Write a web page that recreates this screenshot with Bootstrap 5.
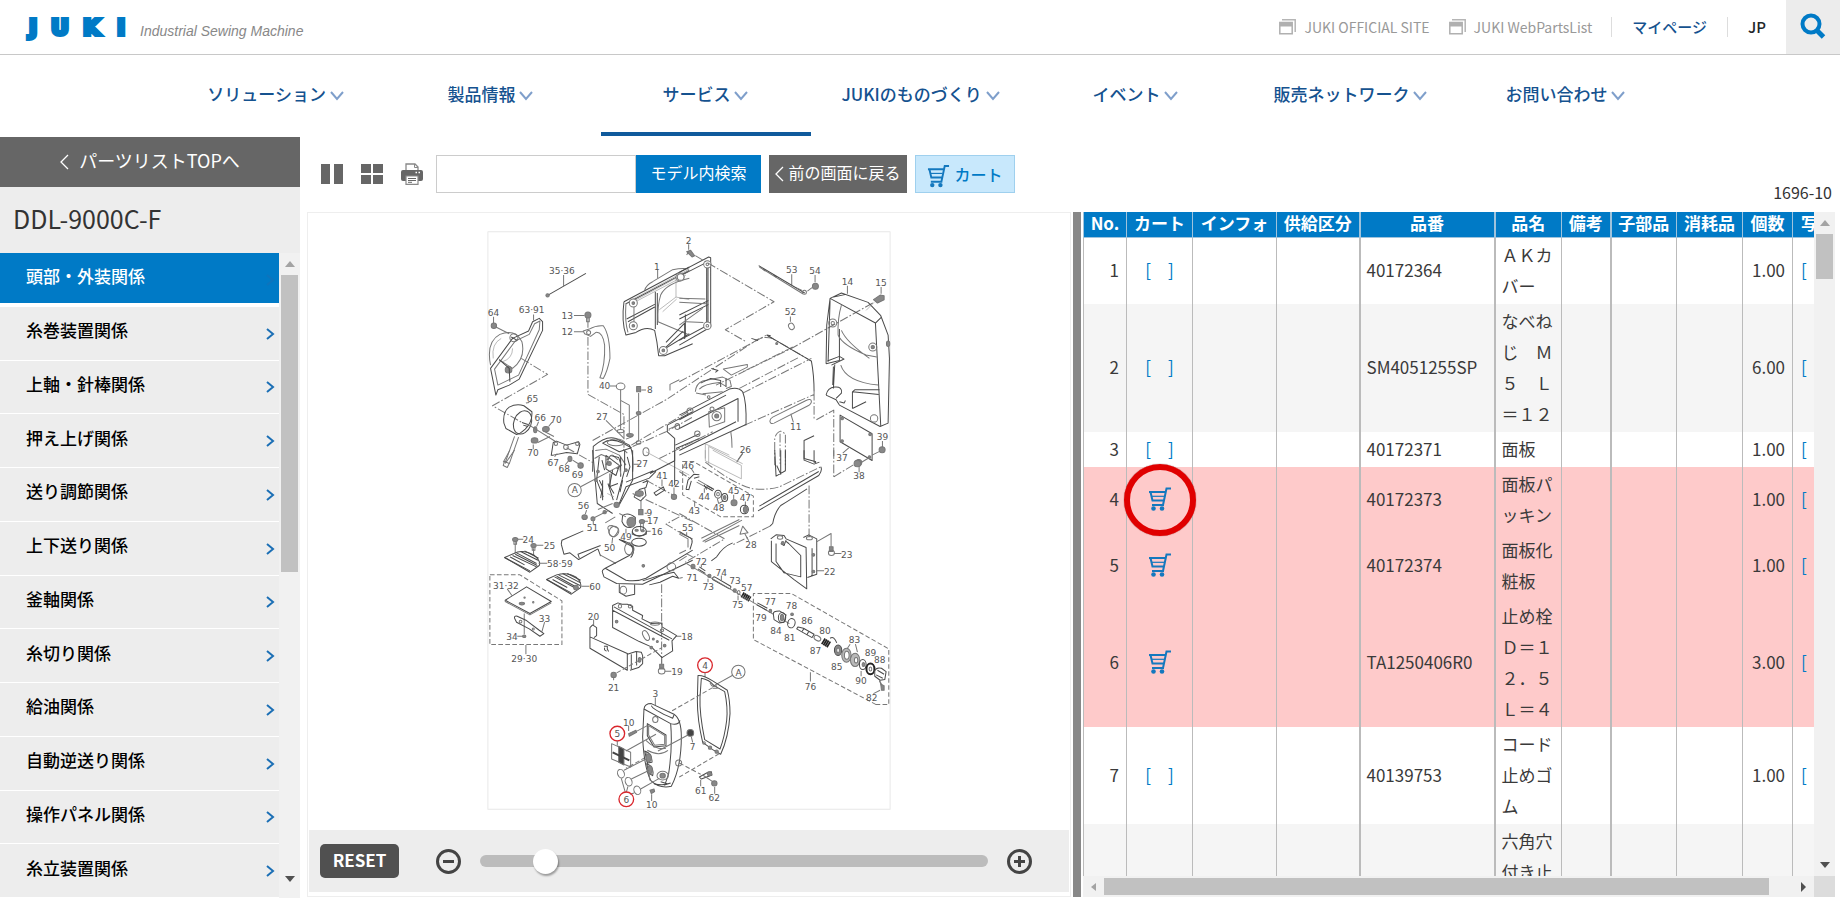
<!DOCTYPE html>
<html lang="ja">
<head>
<meta charset="utf-8">
<meta name="viewport" content="width=device-width, initial-scale=1">
<title>JUKI パーツリスト DDL-9000C-F</title>
<link rel="stylesheet" href="https://cdn.jsdelivr.net/npm/bootstrap@5.3.0/dist/css/bootstrap.min.css">
<style>
:root{--jk-blue:#007ac6;--jk-navy:#105a9c;--jk-gray:#666;--jk-pale:#ededed}
body{font-family:"Noto Sans CJK JP",sans-serif;font-size:17px;line-height:31px;color:#333}
a{text-decoration:none}
.site-top{height:55px;border-bottom:1px solid #c8c8c8}
.tagline{font:italic 14px/18px "Liberation Sans",sans-serif;color:#888}
.ext-link{font-size:14px;color:#999;margin-right:19px}
.top-link{font-size:15px;font-weight:500;line-height:20px;padding:0 20px;border-left:1px solid #ddd;color:#15528f}
.search-btn{width:54px;background:#ececec}
.main-nav{height:82px;max-width:1505px}
.main-nav a{flex:1 1 0;height:81px;margin:0 2px 0 3px;padding-top:23px;color:#15528f;font-weight:500;border-bottom:4px solid transparent;text-align:center;white-space:nowrap}
.main-nav a.active{border-color:var(--jk-navy)}
.side{width:300px;background:var(--jk-pale)}
.side-top{height:50px;background:var(--jk-gray);color:#fff;font-size:18px;gap:10px}
.side h1{height:66px;font-size:25px;line-height:62px;padding-left:13px;font-weight:400}
.side-list a{flex:1 1 0;min-height:0;color:#000;font-weight:500;padding:0 4px 7px 26px;border-bottom:1px solid #fff}
.side-list a.active{background:var(--jk-blue);color:#fff;box-shadow:inset 0 -3px #fff}
.side-list a svg{margin-top:8px}
.vbar{width:21px;background:#f1f1f1;padding:0 2px}
.hbar{height:21px;background:#f1f1f1;padding:2px 0}
.thumb{background:#c1c1c1}
.tools{height:75px;padding-bottom:2px}
.view-btns{gap:18px;padding:0 13px 0 21px}
.tools .ctl{height:38px;border:0;border-radius:0;font-size:16px;line-height:24px;padding:0 0 3px}
.tools .ctl.find{width:200px;border:1px solid #ccc}
.b-find{width:125px;background:var(--jk-blue);color:#fff}
.b-back{width:138px;background:var(--jk-gray);color:#fff}
.tools .b-cart{width:100px;background:#c8e8fc;color:var(--jk-blue);border:1px solid #9fd0ee;font-weight:500;padding:0}
.icon-btn{border:0;background:none;padding:0;width:22px;line-height:0}
.panes{display:grid;grid-template-columns:minmax(0,764fr) 8px minmax(0,752fr);gap:0 2px;padding:0 5px 1px 7px}
.draw-pane{border:1px solid #eee}
.draw-area{padding:18px 0 20px}
.zoom-bar{height:62px;margin:0 1px 4px;background:var(--jk-pale);padding:0 37px 0 11px}
.b-reset{width:79px;height:34px;border:0;border-radius:5px;background:#505050;color:#fff;font-weight:700;line-height:24px;padding:0 0 2px;margin-right:33px}
.zoom-range{-webkit-appearance:none;appearance:none;height:12px;border-radius:6px;background:#bcbcbc;margin:0 19px}
.zoom-range::-webkit-slider-thumb{-webkit-appearance:none;width:25px;height:25px;border-radius:50%;background:#fff;box-shadow:1px 2px 2px rgba(0,0,0,.35)}
.splitter{background:#888}
.parts{table-layout:fixed;width:860px;border-collapse:collapse}
.parts th{height:25px;background:var(--jk-blue);color:#fff;line-height:21px;padding:0 0 3px;border:1px solid #9fc3dc;border-top:0;text-align:center;white-space:nowrap}
.parts td{padding:1px 0 3px 6px;border:solid #bbb;border-width:0 1px;vertical-align:middle;color:#3a3a3a}
.parts td.num{text-align:right;padding:1px 7px 3px 0}
.parts td.buy{text-align:center;padding-left:0}
.parts .wide{border-left-width:2px}
.parts tbody tr:nth-child(even){background:#f5f5f5}
.parts tbody tr.hit{background:#fecaca}
.parts a{color:var(--jk-blue)}
.parts td svg{display:block;margin:auto}
.ring{position:absolute;left:50%;top:50%;width:72px;height:72px;margin:-36px 0 0 -36px;border:6px solid #e00000;border-radius:50%;box-shadow:0 0 1px #600;pointer-events:none}
.dwg{fill:none;stroke:#777;stroke-width:3;stroke-linejoin:round}
.dwg .dk{stroke:#4a4a4a;stroke-width:3}
.dwg .lt{stroke:#999;stroke-width:2}
.dwg .ph{stroke-dasharray:26 6 5 6}
.dwg .da{stroke-dasharray:14 7}
.dwg .fl{fill:#888}
.dwg .wh{fill:#fff}
.dwg text{font-family:"DejaVu Sans",sans-serif;font-size:27px;fill:#555;stroke:none;text-anchor:middle}
.dwg .red{stroke:#d9262c;stroke-width:4}
</style>
<script src="https://cdn.jsdelivr.net/npm/bootstrap@5.3.0/dist/js/bootstrap.bundle.min.js"></script>
</head>
<body class="vh-100 overflow-hidden d-flex flex-column">
<svg width="0" height="0" class="position-absolute" aria-hidden="true">
<defs>
<symbol id="i-down" viewBox="0 0 14 10"><path d="M1 1l6 7 6-7" fill="none" stroke="#7f9fcb" stroke-width="2"/></symbol>
<symbol id="i-next" viewBox="0 0 9 12"><path d="M1 1l6 5-6 5" fill="none" stroke="#1b6fb5" stroke-width="2"/></symbol>
<symbol id="i-prev" viewBox="0 0 9 16"><path d="M8 1L1 8l7 7" fill="none" stroke="#fff" stroke-width="1.3"/></symbol>
<symbol id="i-win" viewBox="0 0 17 16"><path d="M3 .8h13.2V13" fill="none" stroke="#b5b5b5" stroke-width="1.5"/><path d="M.8 3.5h12.4v11.2H.8z" fill="#fff" stroke="#b0b0b0" stroke-width="1.5"/><path d="M1 3.500h12v4H1z" fill="#b0b0b0"/></symbol>
<symbol id="i-cart" viewBox="0 0 24 24"><path d="M1 5h16M2.500 5l2 8.500h12M4 18h12M23 1.500h-4.500L15 18" fill="none" stroke="#1478be" stroke-width="2"/><path d="M4 9.300h12" stroke="#1478be" stroke-width="1.200"/><circle cx="5.500" cy="21.500" r="2.300" fill="#1478be"/><circle cx="14" cy="21.500" r="2.300" fill="#1478be"/></symbol>
<symbol id="i-up" viewBox="0 0 10 6"><path d="M0 6l5-6 5 6z" fill="#a3a3a3"/></symbol>
<symbol id="i-dn" viewBox="0 0 10 6"><path d="M0 0h10L5 6z" fill="#505050"/></symbol>
</defs>
</svg>

<header class="site-top d-flex flex-shrink-0 align-items-center">
  <a href="#" class="d-flex align-items-center me-auto" aria-label="JUKI Industrial Sewing Machine">
    <svg width="108" height="32" class="ms-4" viewBox="0 0 108 32"><text x="5 27 59 93" y="24" font-family="DejaVu Sans" font-weight="700" font-size="22" fill="#007ac6" stroke="#007ac6" stroke-width="4">JUKI</text></svg>
    <span class="tagline ms-2 pt-2">Industrial Sewing Machine</span>
  </a>
  <a href="#" class="ext-link d-flex align-items-center gap-2"><svg width="17" height="16"><use href="#i-win"/></svg>JUKI OFFICIAL SITE</a>
  <a href="#" class="ext-link d-flex align-items-center gap-2"><svg width="17" height="16"><use href="#i-win"/></svg>JUKI WebPartsList</a>
  <a href="#" class="top-link">マイページ</a>
  <a href="#" class="top-link text-dark">JP</a>
  <button class="search-btn border-0 h-100 p-0 pb-2" aria-label="検索"><svg width="26" height="26" viewBox="0 0 26 26" fill="none" stroke="#007ac6"><circle cx="11" cy="11" r="8.500" stroke-width="4"/><path d="M17 17.500l6.500 6.500" stroke-width="5"/></svg></button>
</header>

<nav class="main-nav d-flex flex-shrink-0 w-100 mx-auto">
  <a href="#">ソリューション <svg width="14" height="10"><use href="#i-down"/></svg></a>
  <a href="#">製品情報 <svg width="14" height="10"><use href="#i-down"/></svg></a>
  <a href="#" class="active">サービス <svg width="14" height="10"><use href="#i-down"/></svg></a>
  <a href="#">JUKIのものづくり <svg width="14" height="10"><use href="#i-down"/></svg></a>
  <a href="#">イベント <svg width="14" height="10"><use href="#i-down"/></svg></a>
  <a href="#">販売ネットワーク <svg width="14" height="10"><use href="#i-down"/></svg></a>
  <a href="#">お問い合わせ <svg width="14" height="10"><use href="#i-down"/></svg></a>
</nav>

<div class="d-flex flex-grow-1 overflow-hidden">
<aside class="side d-flex flex-column flex-shrink-0">
  <a href="#" class="side-top d-flex align-items-center justify-content-center flex-shrink-0 pb-1"><svg class="mt-1" width="9" height="16"><use href="#i-prev"/></svg>パーツリストTOPへ</a>
  <h1 class="m-0 flex-shrink-0">DDL-9000C-F</h1>
  <div class="d-flex flex-grow-1 overflow-hidden">
    <div class="side-list d-flex flex-column flex-grow-1">
      <a href="#" class="active d-flex align-items-center justify-content-between">頭部・外装関係<svg width="9" height="12" opacity=".5"><use href="#i-next"/></svg></a>
      <a href="#" class="d-flex align-items-center justify-content-between">糸巻装置関係<svg width="9" height="12"><use href="#i-next"/></svg></a>
      <a href="#" class="d-flex align-items-center justify-content-between">上軸・針棒関係<svg width="9" height="12"><use href="#i-next"/></svg></a>
      <a href="#" class="d-flex align-items-center justify-content-between">押え上げ関係<svg width="9" height="12"><use href="#i-next"/></svg></a>
      <a href="#" class="d-flex align-items-center justify-content-between">送り調節関係<svg width="9" height="12"><use href="#i-next"/></svg></a>
      <a href="#" class="d-flex align-items-center justify-content-between">上下送り関係<svg width="9" height="12"><use href="#i-next"/></svg></a>
      <a href="#" class="d-flex align-items-center justify-content-between">釜軸関係<svg width="9" height="12"><use href="#i-next"/></svg></a>
      <a href="#" class="d-flex align-items-center justify-content-between">糸切り関係<svg width="9" height="12"><use href="#i-next"/></svg></a>
      <a href="#" class="d-flex align-items-center justify-content-between">給油関係<svg width="9" height="12"><use href="#i-next"/></svg></a>
      <a href="#" class="d-flex align-items-center justify-content-between">自動逆送り関係<svg width="9" height="12"><use href="#i-next"/></svg></a>
      <a href="#" class="d-flex align-items-center justify-content-between">操作パネル関係<svg width="9" height="12"><use href="#i-next"/></svg></a>
      <a href="#" class="d-flex align-items-center justify-content-between">糸立装置関係<svg width="9" height="12"><use href="#i-next"/></svg></a>
    </div>
    <div class="vbar d-flex flex-column align-items-center">
      <svg class="flex-shrink-0 my-2" width="10" height="6"><use href="#i-up"/></svg>
      <div class="thumb w-100" style="height:46%"></div>
      <svg class="flex-shrink-0 mt-auto mb-3" width="10" height="6"><use href="#i-dn"/></svg>
    </div>
  </div>
</aside>

<main class="flex-grow-1 d-flex flex-column overflow-hidden">
  <div class="tools d-flex flex-shrink-0 align-items-center">
    <div class="view-btns d-flex align-items-center">
      <button class="icon-btn" aria-label="2分割"><svg width="22" height="20"><path d="M0 0h9v20H0zM13 0h9v20h-9z" fill="#666"/></svg></button>
      <button class="icon-btn" aria-label="4分割"><svg width="22" height="20"><path d="M0 0h10v9H0zM12 0h10v9H12zM0 11h10v9H0zM12 11h10v9H12z" fill="#666"/></svg></button>
      <button class="icon-btn" aria-label="印刷"><svg width="22" height="22" viewBox="0 0 22 22"><path d="M5 8V1h9l3 3v4" fill="#fff" stroke="#888" stroke-width="1.300"/><path d="M13.500 1v3.500H17" fill="none" stroke="#888"/><path d="M2 7h18a2 2 0 012 2v7a2 2 0 01-2 2H2a2 2 0 01-2-2V9a2 2 0 012-2z" fill="#666"/><path d="M14.500 9.500h1.500M17.500 9.500H19" stroke="#fff" stroke-width="1.500"/><path d="M5 13h12v8.300H5z" fill="#fff" stroke="#888" stroke-width="1.200"/><path d="M7 15.500h8M7 17.500h8M7 19.300h4" stroke="#666"/></svg></button>
    </div>
    <form class="d-flex" onsubmit="return false">
      <input class="ctl find" type="text" aria-label="モデル内検索"><button class="ctl b-find">モデル内検索</button>
      <button type="button" class="ctl b-back ms-2 d-flex align-items-center justify-content-center"><svg class="me-1 mt-1" width="9" height="16"><use href="#i-prev"/></svg>前の画面に戻る</button>
      <button type="button" class="ctl b-cart ms-2 d-flex align-items-center justify-content-center"><svg class="me-1 mt-1" width="23" height="24"><use href="#i-cart"/></svg>カート</button>
    </form>
    <span class="fs-6 ms-auto me-2 align-self-end lh-sm pb-2">1696-10</span>
  </div>

  <div class="panes flex-grow-1 overflow-hidden">
    <section class="draw-pane d-flex flex-column overflow-hidden">
      <div class="draw-area flex-grow-1 overflow-hidden">
<svg class="dwg w-100 h-100 d-block" viewBox="1464 693 1210 1736" role="img" aria-label="頭部・外装関係 分解図">
<rect x="1466" y="695" width="1206" height="1732" stroke="#e8e8e8"/>
<!-- upper left: side cover, belt cover, back panel -->
<g transform="translate(1440 675)">
<path class="dk" d="M205 211L320 145"/><circle cx="205" cy="211" r="5" class="fl"/><path d="M253 150v34M535 135v25"/>
<path class="dk" d="M34 430L100 340 148 318 160 290 180 280 190 290 190 316 120 462 90 480 56 494 50 510z"/><path d="M46 432L108 348 150 328 166 296 182 288 180 314 118 450 56 480z"/>
<path d="M34 420Q20 350 62 328Q108 310 128 350Q140 400 100 430L60 404"/><path class="lt" d="M42 400Q36 356 66 340M100 370Q100 400 70 410"/><circle cx="104" cy="338" r="12"/><circle cx="88" cy="434" r="10" class="fl"/><path class="dk" d="M60 404L90 430 92 470M96 336l18 10"/>
<path d="M43 275v20M163 268v18"/><circle cx="44" cy="302" r="8" class="fl"/><path d="M50 306L90 326"/>
<path class="ph" d="M126 400L205 448 40 542 128 592"/>
<path d="M284 271h32M284 320h28M326 276v32"/><circle cx="326" cy="270" r="9" class="fl"/><path d="M322 278v12h8v-12"/>
<path d="M312 318L330 312Q350 300 372 302Q392 330 392 400Q384 440 372 460L362 458Q378 420 376 360Q370 320 350 322L334 334 316 326z"/><circle cx="328" cy="322" r="6"/>
<path class="ph" d="M326 336V508L434 568V668"/>
<path d="M496 196Q500 180 520 170L580 134Q610 128 628 132"/><path class="dk" d="M434 230L630 126M440 236L630 136M434 230Q426 290 440 330L470 322Q500 302 526 316Q534 350 538 392L556 392 640 356M545 378L630 326M442 282L526 238M446 290L526 246M528 200V312M534 204V300"/>
<path d="M440 234Q436 290 446 322M464 236L464 304M630 160Q560 176 544 210Q534 240 536 290L630 330"/><path class="lt" d="M590 160V216L630 224M590 216L540 254M592 222L550 260M450 228L630 132M456 232L626 140M450 240L620 150"/><path class="dk" d="M560 352L616 294V342M560 366L612 318"/>
<circle cx="462" cy="234" r="12" class="wh"/><circle cx="462" cy="302" r="12" class="wh"/><circle cx="602" cy="156" r="12" class="wh"/><circle cx="552" cy="376" r="12" class="wh"/><g class="fl"><circle cx="462" cy="234" r="4"/><circle cx="462" cy="302" r="4"/><circle cx="602" cy="156" r="4"/><circle cx="552" cy="376" r="4"/></g>
<path d="M392 483h20M486 495h14M424 494v118M424 526l26 14v84M478 504v144"/><ellipse cx="424" cy="484" rx="13" ry="10"/><rect x="472" y="484" width="12" height="16" class="fl"/><ellipse cx="478" cy="564" rx="7" ry="5" class="fl"/><ellipse cx="424" cy="618" rx="10" ry="5"/><ellipse cx="452" cy="630" rx="10" ry="5" class="fl"/><ellipse cx="478" cy="652" rx="7" ry="5"/>
<path class="ph" d="M340 646L560 524 830 346Q850 332 880 340M460 664L560 620 640 576"/>
<path class="dk" d="M74 594Q70 560 90 546Q112 534 134 542L158 560Q160 590 138 612Q120 628 112 628L80 610z"/><ellipse cx="130" cy="592" rx="26" ry="36" transform="rotate(22 130 592)" class="dk"/><path class="dk" d="M128 592l18 6M132 600l14 4"/><path d="M140 534l10-2M106 634L78 712M118 636L90 716"/>
<ellipse cx="168" cy="614" rx="5" ry="9" class="fl"/><path d="M150 600L230 650M178 590l-6 14M218 592l-10 12M162 672v-14M190 616l34 18M176 652l36-18"/><ellipse cx="200" cy="612" rx="10" ry="8" class="fl"/><ellipse cx="166" cy="646" rx="10" ry="8" class="fl"/>
<path class="dk" d="M216 690L222 652 232 648 262 660 298 650 302 658 294 686 262 682 222 690z"/><circle cx="260" cy="666" r="7"/><circle cx="230" cy="656" r="5"/><circle cx="294" cy="656" r="5"/><path class="ph" d="M262 668L340 712"/>
<path d="M380 586L434 640"/>
<path class="dk" d="M340 740L342 664Q380 630 410 640L450 660Q464 680 460 740M370 654Q396 636 430 654L456 668 420 680z"/><ellipse cx="410" cy="652" rx="26" ry="10"/><path d="M348 676L380 672 420 690 440 720M432 672l12 12M346 700l20-12 24 10-10 22M400 690l16 14"/>
<ellipse cx="500" cy="680" rx="9" ry="12"/><path class="lt" d="M500 680L630 750"/><path class="dk" d="M564 600V620L586 640V780M564 600L640 560M588 660L660 626M590 670L660 640"/><ellipse cx="594" cy="604" rx="7" ry="9"/>
<path class="ph" d="M456 660L640 552M540 700L700 620"/><path d="M572 496V478L600 464M440 642l20 -8M568 612L600 598"/>
</g>
<!-- upper right: arm, end cover, plate -->
<g transform="translate(2040 675)">
<path d="M28 58v16M337 148v32M407 150v22M504 182v24M605 186v20M333 274v16"/><path d="M22 80l12-4 12 16-8 4zM30 76l-8 14" class="fl"/>
<path class="dk" d="M0 142L88 96 94 98V306L0 360M0 154L82 112V302L0 346M0 270L88 226M0 282L88 238M18 268V336M86 120V300"/><circle cx="84" cy="118" r="11" class="wh"/><circle cx="84" cy="302" r="11" class="wh"/><circle cx="4" cy="156" r="10" class="wh"/><circle cx="84" cy="118" r="4"/><circle cx="84" cy="302" r="4"/><path d="M0 220L78 222M0 232L80 236M0 300L70 250M20 290L72 292"/>
<path class="ph" d="M48 92L284 230 138 314 200 350M580 234L340 368 110 480M411 584L463 555V700M340 366L190 440"/>
<path class="dk" d="M238 122L376 204M250 132l8 6M282 150l8 6"/><path d="M240 126L370 206M350 188l18 8"/><circle cx="375" cy="202" r="6"/><path d="M384 198l14-10"/><circle cx="408" cy="184" r="9" class="fl"/>
<ellipse cx="336" cy="304" rx="8" ry="10" transform="rotate(-30 336 304)"/>
<path class="dk" d="M440 416L442 300 452 220 486 204 566 232 604 272 626 330 630 400 626 594 602 604 480 540 470 524 440 510M452 220L588 294 604 604M462 216L500 208M588 294L606 276M452 226L446 410M440 416L480 406 480 312M466 418L462 490M462 424L460 480"/>
<path d="M486 240Q474 280 476 330Q488 360 560 390L592 396M486 316Q500 350 570 400M484 420Q500 470 596 480"/><circle cx="460" cy="294" r="12"/><circle cx="460" cy="294" r="5"/><circle cx="580" cy="366" r="12"/><circle cx="580" cy="366" r="5" class="fl"/><circle cx="584" cy="580" r="11"/><path class="dk" d="M444 408L480 394 494 402 456 420M519 550V500L526 494H600M519 500L598 508M519 550L560 530M440 510Q444 488 466 486Q490 484 486 504L470 520M480 530l14 4 4-8"/>
<path d="M582 224l20-14 12 2v12l-20 10z" class="fl"/><ellipse cx="626" cy="356" rx="5" ry="8" class="fl"/><path d="M560 256L584 232" class="lt"/>
<path class="ph" d="M0 470L262 330 396 408"/><path d="M262 330L396 408Q404 450 404 500" class="dk"/><path class="ph" d="M404 500V580M190 504L396 400M180 490L360 396M196 600L404 508"/><path d="M216 340l20 6M262 330l12 2" class="dk"/><circle cx="292" cy="355" r="3" class="fl"/>
<path class="dk" d="M0 570L150 492Q176 484 190 500Q202 530 200 600M0 584L140 510M0 690L200 598M0 676L170 590M0 610L176 520V590"/><path d="M48 500Q50 476 70 468L130 456 152 466 156 484 140 490M60 492Q74 476 120 472L140 484M70 506L130 500M50 504l30 6"/><path d="M132 432L204 418V426L156 450z"/><path class="dk" d="M64 474l30-14 30 6v20M96 430l20 6-8 6M140 460v26"/>
<path d="M88 560L136 548V590L90 606z"/><circle cx="112" cy="573" r="14"/><circle cx="112" cy="573" r="6" class="fl"/><circle cx="98" cy="552" r="6"/><circle cx="32" cy="558" r="9"/><circle cx="54" cy="626" r="8"/><circle cx="88" cy="516" r="4"/>
<path d="M272 590Q270 582 280 576L380 526Q394 520 396 528 396 538 386 542L284 594Q274 598 272 590zM334 566l8 26M190 684l-14 20"/><path d="M154 618Q158 640 158 668"/>
<path class="lt" d="M78 700V656L150 690M88 716V664L190 716"/>
<path class="ph" d="M286 720V640Q290 622 304 618L318 626V720M302 626V716"/><path class="dk" d="M404 632L374 646V700L410 710"/>
<path d="M482 570L578 626V706L482 650z" class="dk"/><g class="fl"><circle cx="488" cy="580" r="4"/><circle cx="572" cy="628" r="4"/><circle cx="488" cy="648" r="4"/><circle cx="570" cy="696" r="4"/></g><path d="M609 648v18M490 684l18-16M578 690l24-12"/><circle cx="608" cy="674" r="9" class="fl"/><circle cx="538" cy="712" r="9" class="fl"/>
</g>
<!-- lower left: base, needle plates, brackets -->
<g transform="translate(1440 1350)">
<path d="M106 0L78 40M92 0L72 36M76 34l14 6-6 12-12-6z"/><ellipse cx="272" cy="26" rx="6" ry="8" class="fl"/><circle cx="304" cy="46" r="8" class="fl"/><path d="M226 20l8-10M258 44l10-12M280 30l16 10"/>
<circle cx="286" cy="120" r="20"/><path d="M304 110L420 48"/>
<path class="dk" d="M340 0L354 160 400 190M460 0V90L420 164M436 0V60L412 150M360 20L352 90 372 140M380 16l40 30-10 30-30-20zM370 90v60M386 100l16 50M400 60l-10 50 26 -10"/><g class="fl"><circle cx="350" cy="90" r="4"/><circle cx="390" cy="40" r="6"/><circle cx="412" cy="164" r="8"/><circle cx="376" cy="186" r="5"/><circle cx="356" cy="64" r="4"/><circle cx="440" cy="60" r="4"/></g>
<path class="dk" d="M382 30l12-14 24 6 8 24-14 10M360 90l10 20-6 34M376 60l-8-30M392 70v40l12 20M424 20v60M430 90l-8 36M444 20l8 30-10 30"/>
<path d="M400 12l-20 16M416 40l10 36M384 130l20 10" class="lt"/>
<path class="dk" d="M420 160L440 110 510 84 530 64M586 0V32L512 70M440 96L522 62"/><path class="dk" d="M464 140l16-22 20-6 6-20-16 6M464 140l20 12 16-16-4-24"/><g class="fl"><ellipse cx="480" cy="130" rx="12" ry="8"/></g><path class="ph" d="M460 130L640 214M600 200L560 222 600 246M500 90L580 134"/>
<path d="M478 42h-16M548 88v20M584 112v20M485 150v30"/><path class="dk" d="M524 128l28-18 4 10-26 16z"/><circle cx="584" cy="140" r="8" class="fl"/><rect x="478" y="178" width="13" height="16" class="fl"/><ellipse cx="488" cy="214" rx="8" ry="6" class="fl"/><path d="M484 218v22h8v-22M496 189h8M496 213h10M500 243h14"/>
<path d="M322 180l-4 12M342 224v-12M356 178L400 160M346 202L390 180M440 250V236M398 280l2-18"/><ellipse cx="316" cy="201" rx="8" ry="7" class="fl"/><circle cx="341" cy="206" r="6" class="fl"/>
<path class="dk" d="M430 196Q446 184 468 202L468 214 454 232Q436 234 428 214z"/><ellipse cx="456" cy="216" rx="13" ry="15" class="fl"/><path d="M388 240Q380 226 398 226L416 234Q420 244 404 260Q388 258 388 240z"/><ellipse cx="404" cy="244" rx="14" ry="16" transform="rotate(30 404 244)"/>
<ellipse cx="480" cy="243" rx="21" ry="14" class="dk"/><path class="dk" d="M459 244v8Q480 264 501 252v-8"/><ellipse cx="472" cy="240" rx="5" ry="3" class="fl"/><ellipse cx="490" cy="242" rx="5" ry="3" class="fl"/><ellipse cx="479" cy="276" rx="22" ry="12" class="dk"/><path d="M420 190l20 10M378 218l30 -18"/>
<path class="dk" d="M246 282L248 270 312 242M246 282L254 312 272 308 298 328 356 296M300 324L296 312 364 286M356 296l8 22"/><path d="M362 314L410 340"/>
<path class="dk" d="M370 368Q366 360 378 354L450 316Q468 300 456 288L420 268Q450 276 462 290Q466 310 454 322M370 368L374 380 412 400 490 402 640 330M378 354L440 390Q470 396 500 384L640 300M420 400V426L440 438 466 432V404"/><ellipse cx="432" cy="420" rx="10" ry="12"/><ellipse cx="576" cy="350" rx="13" ry="12"/><circle cx="492" cy="347" r="4" class="fl"/><ellipse cx="450" cy="296" rx="14" ry="18"/>
<path class="dk" d="M490 392L540 376 584 366 598 384 580 378 542 396 510 404"/><path d="M600 248L640 266M600 384l10-2"/><path class="ph" d="M547 402V640M620 310L640 320"/>
<path d="M108 272v40M116 267h16M172 285h20M163 294v40"/><ellipse cx="108" cy="268" rx="8" ry="6" class="fl"/><ellipse cx="163" cy="286" rx="8" ry="6" class="fl"/><path d="M104 272v10h8v-10M159 290v10h8v-10"/>
<path class="dk wh" d="M76 322L104 310Q130 296 166 316Q186 334 180 346L152 366z"/><path class="dk" d="M76 322L152 362M100 316L172 350M112 308l60 32M124 304l52 26M136 302l42 22M108 312l66 34M96 322l40 22M92 320l30 16"/><path class="dk wh" d="M202 388L232 374Q266 364 292 382Q308 396 304 412L276 432z"/><path class="dk" d="M202 388L276 428M226 380L296 418M238 374l64 32M250 370l54 28M264 370l40 20M232 378l66 36M220 388l44 24"/><circle cx="290" cy="412" r="7" class="fl"/><path d="M178 339h26M306 408h24"/>
<path class="da" d="M32 374H122L248 452V583H32z"/><path d="M84 416l14 20M196 516l-8 28M114 558h18M140 584v28M135 490v62"/><path class="dk wh" d="M78 450L142 410 216 454 152 490z"/><path d="M78 450v4L152 494 216 458"/><ellipse cx="128" cy="460" rx="8" ry="4" class="fl"/><circle cx="136" cy="442" r="2"/><circle cx="162" cy="456" r="2"/>
<path class="dk" d="M106 504Q104 496 114 498L140 510 180 540 194 550 182 558 150 536 112 516z"/><circle cx="124" cy="514" r="4"/><circle cx="162" cy="536" r="3"/><ellipse cx="135" cy="558" rx="5" ry="4" class="fl"/>
<path d="M343 508v16"/><path class="dk" d="M332 532V594L444 660V610L332 560M332 532L340 524 352 532V556L344 562M444 612L470 604 486 606 490 616V640L478 652 452 660M456 612V656M472 606V646"/><path class="dk" d="M374 588h10v8l4 8M376 592q-2 10 6 10"/><ellipse cx="481" cy="629" rx="4" ry="7" class="fl"/>
<path class="dk" d="M400 466L416 458 428 462 444 462 460 468V480L490 496 488 506 516 520 548 518 548 530 592 556 578 572 580 602 548 622 530 604 516 590 480 574 400 532zM400 480L570 570M404 470L578 566"/><circle cx="422" cy="468" r="5"/><circle cx="452" cy="468" r="5"/><circle cx="412" cy="514" r="4" class="fl"/><ellipse cx="500" cy="556" rx="8" ry="16" transform="rotate(-28 500 556)"/><g class="fl"><circle cx="522" cy="566" r="3"/><circle cx="534" cy="574" r="3"/><circle cx="516" cy="592" r="4"/><circle cx="556" cy="586" r="4"/></g><ellipse cx="527" cy="520" rx="14" ry="5"/><ellipse cx="548" cy="540" rx="5" ry="4"/>
<path d="M590 558h16M556 663h20M547 624v18M403 690v-8"/><path class="da" d="M412 668L548 592"/><rect x="541" y="642" width="12" height="14" class="fl"/><ellipse cx="547" cy="662" rx="10" ry="9"/><circle cx="403" cy="674" r="8" class="fl"/>
</g>
<!-- lower right: shafts and bracket -->
<g transform="translate(2040 1350)">
<path class="dk" d="M374 0V30L404 42 420 36M404 0V36L410 38M286 0L290 78 318 62V0M304 0V72L292 46"/><path class="lt" d="M78 0V32L186 86V46L100 0"/><path d="M190 10l-18 26"/><path class="ph" d="M78 36Q160 100 220 116Q270 120 300 110L424 50"/>
<path class="dk" d="M424 50Q430 60 418 76L236 182M418 64L240 168"/><path d="M188 210L70 274M180 208L66 264M180 226L76 276"/><path class="dk" d="M383 116Q330 150 304 166Q286 186 280 220L272 228M160 278Q130 290 112 320L96 332"/><path class="ph" d="M272 228L160 284"/>
<path class="ph" d="M389 106V262M463 80L522 44M463 0V80M0 190L136 266 18 336M0 64L30 84"/><path d="M539 66V46M544 38L570 22"/><circle cx="534" cy="40" r="10" class="fl"/>
<path class="da" d="M10 34H42L222 138V200H124L10 134z"/><path class="dk" d="M20 118L26 90 44 72 60 74M28 120L36 92M20 118h8M60 80l-16 4"/><path d="M52 96L100 122M56 90L102 116"/><path class="dk" d="M76 108L100 122M82 106L104 118M74 104l8 14"/><path d="M75 128v-14M36 56l8 12M118 160l-4-14M118 160l14-8M163 134v14M198 154v12M46 170v-18"/>
<ellipse cx="116" cy="132" rx="10" ry="12" class="dk"/><ellipse cx="136" cy="142" rx="9" ry="12" class="dk"/><ellipse cx="136" cy="142" rx="4" ry="6" class="fl"/><ellipse cx="116" cy="132" rx="4" ry="5"/><circle cx="164" cy="158" r="9" class="fl"/><ellipse cx="195" cy="178" rx="12" ry="13" class="dk"/><ellipse cx="198" cy="178" rx="6" ry="9" class="fl"/>
<path class="dk" d="M0 244L34 264Q40 268 38 278L32 298"/><path d="M0 252L26 266 26 292M22 246v10M0 332L22 318M0 310L20 300"/><path d="M182 252L190 228 206 248zM196 250l12 22"/>
<path class="dk" d="M274 266L290 254 314 256 320 266 380 292 382 416 344 388 308 360 276 334V272M290 280V334L314 368 364 380V316L328 280 318 272M372 262L388 254 412 266V372L384 382M398 294V378M320 270l-6 16-10-6"/><ellipse cx="302" cy="262" rx="8" ry="5"/><ellipse cx="390" cy="264" rx="9" ry="5"/><circle cx="402" cy="314" r="4" class="fl"/><circle cx="402" cy="364" r="4" class="fl"/><circle cx="310" cy="278" r="4" class="fl"/><path d="M410 276L455 250V290M464 310h22M412 362h22"/><rect x="450" y="290" width="11" height="14" class="fl"/><ellipse cx="456" cy="308" rx="9" ry="8"/>
<ellipse cx="41" cy="349" rx="6" ry="7" class="fl"/><path class="dk" d="M56 356l22 14M60 350l18 12M100 388L150 416M106 380L154 408M150 416q6-2 4-8M100 388q-2-8 6-8"/><ellipse cx="90" cy="377" rx="5" ry="5" class="fl"/><ellipse cx="166" cy="421" rx="5" ry="5" class="fl"/><ellipse cx="178" cy="427" rx="4" ry="6"/><path d="M188 433L212 447" stroke="#222" stroke-width="17" stroke-dasharray="5 1"/><path d="M18 338L330 520M66 342v10M86 396v-10M126 376v14M176 450v-14"/>
<path class="da" d="M222 430H336L628 596V834H566L222 568z" stroke="none"/><path class="da" d="M590 763L222 568V430H336L628 596V763z"/>
<path d="M234 458L264 474M232 464L262 480" class="dk"/><ellipse cx="273" cy="482" rx="4" ry="5" class="fl"/><ellipse cx="338" cy="492" rx="4" ry="4" class="fl"/>
<path class="dk wh" d="M282 492Q280 482 300 482L320 494 314 516 300 518 284 508z"/><ellipse cx="308" cy="502" rx="11" ry="15" class="dk"/><ellipse cx="308" cy="502" rx="5" ry="10" class="fl"/><ellipse cx="336" cy="519" rx="11" ry="14" class="dk" transform="rotate(15 336 519)"/>
<path class="dk wh" d="M356 530L372 534 404 552 398 562 366 544 352 536z"/><path class="dk" d="M374 534l-6 10M388 544l-6 10"/><ellipse cx="414" cy="564" rx="11" ry="7" class="wh" transform="rotate(30 414 564)"/><path d="M430 572L450 584" stroke="#222" stroke-width="20" stroke-dasharray="5 1"/><path class="dk" d="M452 564Q464 556 472 578"/>
<ellipse cx="476" cy="600" rx="11" ry="16" class="dk fl"/><ellipse cx="476" cy="600" rx="4" ry="7" class="wh"/><ellipse cx="501" cy="615" rx="14" ry="21" class="fl" fill-opacity=".6"/><ellipse cx="502" cy="615" rx="7" ry="12" class="wh"/><ellipse cx="527" cy="629" rx="14" ry="20" class="fl" fill-opacity=".6"/><ellipse cx="530" cy="630" rx="5" ry="8" class="wh"/><ellipse cx="550" cy="643" rx="10" ry="15" class="dk"/><ellipse cx="552" cy="643" rx="4" ry="6" class="fl"/><ellipse cx="573" cy="656" rx="12" ry="16" stroke="#222" stroke-width="6"/><ellipse cx="573" cy="656" rx="4" ry="6"/>
<path class="dk wh" d="M586 662Q590 650 606 654L620 664 616 688 602 690 586 678z"/><path class="dk" d="M594 660l20 12M590 674l20 10"/><path d="M512 582l-8 12M528 582l6 24M545 678v-16M393 694v-28M600 692l6 14"/>
<circle cx="77" cy="645" r="22" class="red"/><circle cx="177" cy="665" r="20"/><path d="M77 667v14M160 675L104 706"/>
</g>
<!-- bottom: face plate, gasket, caps -->
<g transform="translate(1440 1920)">
<path class="dk" d="M656 106Q670 104 700 122L744 150Q752 180 752 220Q748 290 724 342L700 328 670 306Q654 240 654 180zM666 114Q690 118 704 136L736 154Q746 200 742 240Q736 290 722 326L676 298Q660 220 662 170z"/><path d="M528 172v22M692 128q8 16 18 8l4 8h-14"/><path class="da" d="M700 142L560 222M720 340L600 410M590 300L440 384M600 368L664 402"/><circle cx="674" cy="308" r="4"/><circle cx="692" cy="322" r="5" class="fl"/><circle cx="712" cy="334" r="5" class="fl"/>
<path class="dk wh" d="M494 206Q496 190 516 190L584 222Q606 236 606 290Q606 380 576 438Q540 446 514 420Q494 380 490 290z"/><path class="dk" d="M494 206L574 250Q598 256 602 240M516 196Q520 208 580 234L584 224M574 250Q580 320 568 400L556 436"/><path class="dk" d="M504 250L560 284V316L524 320 504 286z"/><path d="M508 256L556 286V312L526 315 508 284z"/><path d="M500 300Q530 330 560 324M504 330Q540 350 566 330M500 334L512 420"/><ellipse cx="528" cy="238" rx="8" ry="9"/><path class="dk" d="M496 332Q520 340 518 366L504 368zM502 370Q526 380 520 406L508 398z"/><ellipse cx="508" cy="352" rx="8" ry="12" class="fl"/><ellipse cx="512" cy="388" rx="7" ry="12" class="fl"/><ellipse cx="550" cy="406" rx="17" ry="13"/><ellipse cx="550" cy="406" rx="8" ry="7" class="fl"/><circle cx="598" cy="368" r="9"/><path class="dk" d="M524 430Q550 438 574 428M544 424l20 6"/>
<path d="M470 274L504 256M448 256v16"/><path d="M448 280l22-10 2 6-22 12z" class="fl"/><circle cx="414" cy="280" r="22" class="red"/><path d="M414 302v14M536 332L626 284"/><circle cx="633" cy="278" r="10" fill="#444"/><path d="M640 306l-4-16"/>
<path d="M397 310L454 336V380L397 356z"/><path d="M418 318v48l16 8v-48z" fill="#444"/><path d="M400 336l50 24" stroke="#444" stroke-width="6"/><path d="M440 332L530 282M434 390L500 356M456 416L510 390M484 446L540 414"/>
<ellipse cx="425" cy="400" rx="10" ry="13" class="wh" transform="rotate(-20 425 400)"/><ellipse cx="448" cy="424" rx="10" ry="13" class="wh" transform="rotate(-20 448 424)"/><ellipse cx="474" cy="450" rx="10" ry="13" class="wh" transform="rotate(-20 474 450)"/><path d="M426 414L438 456M446 438L441 456M464 458L452 462"/><circle cx="441" cy="477" r="22" class="red"/><path d="M512 450l12-4 2 8-10 6z" class="fl"/><path d="M517 482v-20"/>
<path class="dk" d="M660 410L686 396 696 394 698 404 666 416z"/><circle cx="690" cy="400" r="6" class="fl"/><path d="M664 438v-20M706 460v-20M670 404L700 424"/><circle cx="705" cy="429" r="8" class="fl"/><path d="M1200 120l8 16M1182 160l20-10"/><path d="M1204 132l10 4v14h-8z" class="fl"/>
</g>
<g id="labels"></g>
</svg>
      </div>
      <div class="zoom-bar d-flex align-items-center flex-shrink-0">
        <button class="b-reset flex-shrink-0">RESET</button>
        <button class="icon-btn ms-1 w-auto" aria-label="縮小"><svg width="25" height="25" fill="none" stroke="#444" stroke-width="3"><circle cx="12.500" cy="12.500" r="11"/><path d="M7 12.500h11"/></svg></button>
        <input type="range" class="zoom-range flex-grow-1" min="0" max="100" value="11" aria-label="ズーム">
        <button class="icon-btn w-auto" aria-label="拡大"><svg width="25" height="25" fill="none" stroke="#444" stroke-width="3"><circle cx="12.500" cy="12.500" r="11"/><path d="M7 12.500h11M12.500 7v11"/></svg></button>
      </div>
    </section>
    <div class="splitter"></div>
    <section class="d-flex flex-column overflow-hidden">
      <div class="d-flex flex-grow-1 overflow-hidden">
        <div class="flex-grow-1 overflow-hidden">
          <table class="parts">
            <colgroup><col style="width:43px"><col style="width:66px"><col style="width:84px"><col style="width:83px"><col style="width:135px"><col style="width:67px"><col style="width:49px"><col style="width:66px"><col style="width:66px"><col style="width:50px"><col></colgroup>
            <thead><tr><th>No.</th><th>カート</th><th>インフォ</th><th>供給区分</th><th class="wide">品番</th><th class="wide">品名</th><th>備考</th><th class="wide">子部品</th><th>消耗品</th><th>個数</th><th class="text-start ps-2">写真</th></tr></thead>
            <tbody id="rows"></tbody>
          </table>
        </div>
        <div class="vbar d-flex flex-column align-items-center flex-shrink-0">
          <svg class="flex-shrink-0 my-2" width="10" height="6"><use href="#i-up"/></svg>
          <div class="thumb w-100" style="height:45px"></div>
          <svg class="flex-shrink-0 mt-auto mb-2" width="10" height="6"><use href="#i-dn"/></svg>
        </div>
      </div>
      <div class="d-flex flex-shrink-0">
        <div class="hbar flex-grow-1 d-flex align-items-center">
          <svg class="mx-2" width="5" height="8"><path d="M5 0v8L0 4z" fill="#a3a3a3"/></svg>
          <div class="thumb h-100 flex-grow-1"></div>
          <svg class="ms-4 me-2 ps-2" width="13" height="10"><path d="M0 0v10l5-5z" fill="#505050"/></svg>
        </div>
        <div class="vbar" style="background:#dcdcdc"></div>
      </div>
    </section>
  </div>
</main>
</div>

<script>
// Part rows: number, part code, name lines, quantity, can be ordered
const rows = [
  [1, '40172364', 'ＡＫカ|バー', '1.00', 0],
  [2, 'SM4051255SP', 'なべね|じ　Ｍ|５　Ｌ|＝１２', '6.00', 0],
  [3, '40172371', '面板', '1.00', 0],
  [4, '40172373', '面板パ|ッキン', '1.00', 1],
  [5, '40172374', '面板化|粧板', '1.00', 1],
  [6, 'TA1250406R0', '止め栓|Ｄ＝１|２．５|Ｌ＝４', '3.00', 1],
  [7, '40139753', 'コード|止めゴ|ム', '1.00', 0],
  [8, 'SM6042502TP', '六角穴|付き止|めねじ|Ｍ４　|Ｌ＝２|５', '2.00', 0]
];
const cart = '<a href="#" aria-label="カートに入れる"><svg width="24" height="24"><use href="#i-cart"/></svg></a>';
document.getElementById('rows').innerHTML = rows.map(([n, code, name, qty, buy]) =>
  `<tr class="${buy ? 'hit' : ''}"><td class="num">${n}</td><td class="buy${n === 4 ? ' position-relative' : ''}">${buy ? cart : '<a href="#">[　]</a>'}${n === 4 ? '<span class="ring"></span>' : ''}</td><td></td><td></td><td class="wide">${code}</td><td class="wide text-nowrap">${name.split('|').join('<br>')}</td><td></td><td class="wide"></td><td></td><td class="num">${qty}</td><td class="ps-2"><a href="#">[　]</a></td></tr>`).join('');

// Callout numbers of the drawing, grouped by quadrant: origin, then "text x y"
const callouts = [
  [1440, 675, '35·36 248 138,1 533 124,64 43 264,63·91 157 255,13 264 271,12 264 320,40 376 483,8 512 495,65 160 522,27 368 576,66 183 579,70 230 583,70 161 684'],
  [2040, 675, '2 28 48,53 337 135,54 407 138,14 504 171,15 605 174,52 333 261,11 349 606,26 198 675,39 609 636,37 488 698'],
  [1440, 1350, '67 222 39,68 255 56,69 295 75,27 489 42,41 548 78,42 584 102,A 287 120,56 313 168,9 510 189,17 520 213,51 340 234,16 533 243,49 440 258,50 391 291,24 147 267,25 211 285,58·59 242 339,60 347 408,31·32 80 405,33 196 504,34 98 558,29·30 135 624,20 343 498,19 593 663,21 403 712'],
  [2040, 1350, '46 27 47,44 75 141,45 163 123,47 198 144,48 118 174,43 45 183,38 539 78,55 25 234,28 215 282,72 66 333,71 39 381,73 87 408,74 126 366,73 167 390,57 202 411,75 175 462,77 273 453,78 336 465,79 245 501,84 290 540,81 331 561,86 383 510,80 437 540,87 408 600,83 525 567,85 472 648,89 573 606,88 601 627,90 545 690,76 393 708,23 502 312,22 451 363,18 23 558,4 77 645,A 178 666'],
  [1440, 1920, '3 528 160,10 448 246,5 414 280,7 640 318,6 441 477,10 517 492,61 664 450,62 705 471,82 1177 171']
];
document.getElementById('labels').innerHTML = callouts.map(([ox, oy, list]) => list.split(',').map(item => {
  const [t, x, y] = item.split(' ');
  return `<text x="${ox + +x}" y="${oy + +y + 10}">${t}</text>`;
}).join('')).join('');
</script>
</body>
</html>
